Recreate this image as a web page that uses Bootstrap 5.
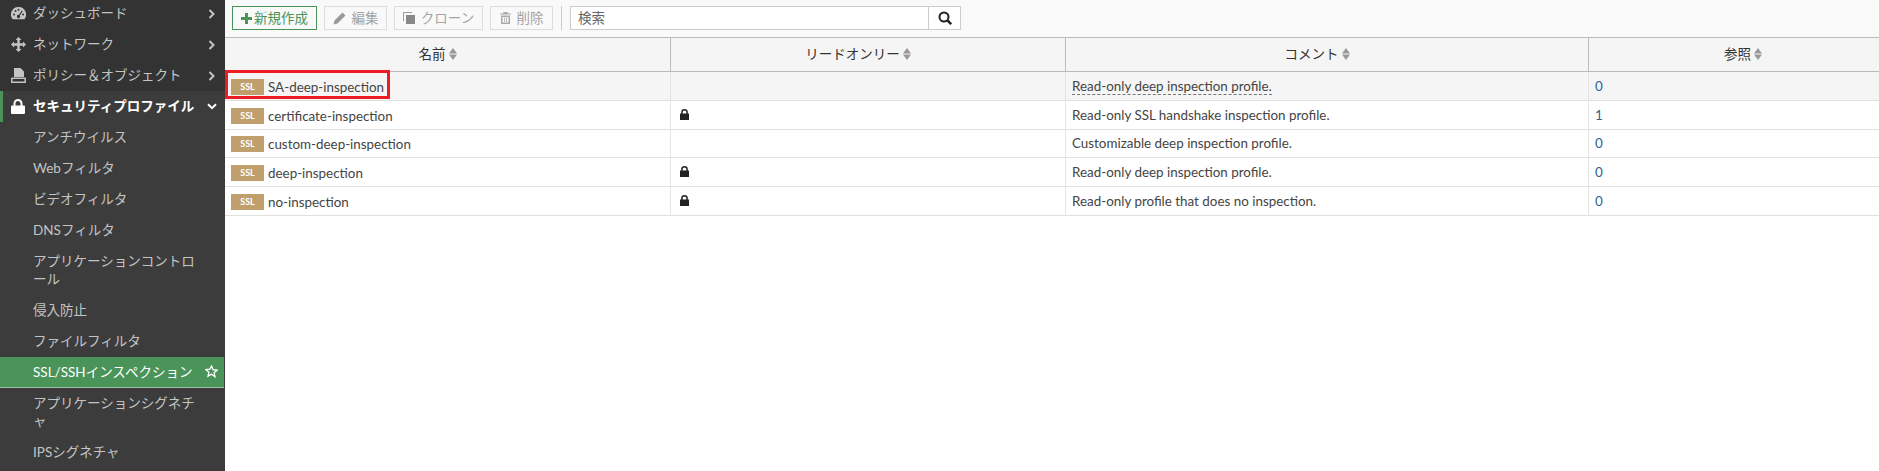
<!DOCTYPE html>
<html lang="ja">
<head>
<meta charset="utf-8">
<title>SSL/SSH</title>
<link rel="stylesheet" href="https://cdn.jsdelivr.net/npm/bootstrap@5.3.0/dist/css/bootstrap.min.css">
<style>
html,body{height:471px;overflow:hidden;}
body{font-family:Lato,"Noto Sans CJK JP",sans-serif;font-size:13.5px;color:#333;background:#fff;}
.shell{width:1879px;height:471px;position:relative;}
.sidenav{width:225px;flex:none;background:#3c3c3c;color:#c4c4c4;overflow:hidden;}
.topgroup{background:#333;margin-top:-2px;}
.navrow{height:31px;display:flex;align-items:center;padding-right:10px;}
.navrow .ico{width:33px;flex:none;display:flex;justify-content:center;padding-left:3px;}
.navrow .lbl{flex:1;}
.navrow.cur{background:#3c3c3c;color:#fff;font-weight:700;box-shadow:inset 3px 0 0 #4b9459;padding-right:8px;}
.sub{padding:6px 8px 7px 33px;line-height:18px;}
.sub.on{background:#4b9459;color:#fff;display:flex;justify-content:space-between;align-items:center;height:31px;border-bottom:1px solid #9dbfa3;padding-right:6px;margin-right:1px;}
.mainpane{flex:1;min-width:0;overflow:hidden;}
.tools{height:38px;background:#f9f9f9;border-bottom:1px solid #bbb;gap:7px;padding:6px 0 0 7px;}
.tbtn{height:24px;border:1px solid #ddd;border-radius:0;padding:0;font-size:13.5px;line-height:20px;color:#a4a4a4;background:transparent;display:flex;align-items:center;justify-content:center;gap:6px;}
.tbtn.addnew{border-color:#4b9459;color:#4b9459;gap:2px;width:85px;}
.wide63{width:63px;}
.wide89{width:89px;}
.tsep{width:1px;height:24px;background:#ccc;margin:0 1px;}
.findbox{width:391px;height:24px;border:1px solid #ccc;background:#fff;}
.findbox input{flex:1;border:0;outline:0;padding:0 7px;font:13.5px Lato,"Noto Sans CJK JP",sans-serif;color:#555;min-width:0;background:transparent;}
.findbox input::placeholder{color:#666;opacity:1;}
.findbtn{width:32px;border-left:1px solid #ccc;display:flex;align-items:center;justify-content:center;}
.gridtbl{width:1692px;table-layout:fixed;border-collapse:separate;border-spacing:0;margin:0;}
.colname{width:446px;}
.colro{width:395px;}
.colcmt{width:523px;}
.colref{width:328px;}
.gridtbl th{height:34px;background:#f5f5f5;font-weight:400;text-align:center;color:#333;border-right:1px solid #bbb;border-bottom:1px solid #bbb;padding:0 20px 0 0;vertical-align:middle;}
.gridtbl td{height:28.8px;padding:0 6px;border-right:1px solid #e4e4e4;border-bottom:1px solid #e0e0e0;vertical-align:middle;color:#444;background:#fff;font-size:13.4px;}
.gridtbl tr.sel td{background:#f5f5f5;}
.gridtbl th:last-child,.gridtbl td:last-child{border-right:0;}
.gridtbl td.namecell{padding:0 0 0 6px;}
.gridtbl td.refnum{color:#2a6496;}
.sorter{display:inline-block;vertical-align:-1px;margin-left:3px;}
.lockmark{display:block;margin:0 0 1px 3px;}
.tagwrap{display:inline-flex;align-items:center;gap:4px;}
.ssltag{display:inline-block;width:33px;height:16px;background:#bf9f6c;color:#fff;font-size:9px;font-weight:700;line-height:16px;text-align:center;}
.redmark{position:absolute;left:225px;top:70px;width:165px;height:29px;border:3px solid #ed1c24;pointer-events:none;}
.dash{border-bottom:1px dashed #777;}
</style>
</head>
<body>
<div class="shell d-flex">
<nav class="sidenav">
<div class="topgroup">
<div class="navrow"><span class="ico"><svg width="15" height="13" viewBox="0 0 15 13"><path fill="#c4c4c4" d="M7.5 0A7.5 7.5 0 0 0 1.6 12.2h11.800A7.500 7.500 0 0 0 7.500 0z"/><g fill="#333"><circle cx="3" cy="7.500" r="1"/><circle cx="4.500" cy="4" r="1"/><circle cx="7.500" cy="2.800" r="1"/><circle cx="12" cy="7.500" r="1"/><path d="M10.800 3.500l.9.5-2.900 4.500a1.600 1.600 0 1 1-1-.6z"/></g></svg></span><span class="lbl">ダッシュボード</span><svg width="7" height="10" viewBox="0 0 7 10"><path d="M1.500 1l4 4-4 4" fill="none" stroke="#c4c4c4" stroke-width="2"/></svg></div>
<div class="navrow"><span class="ico"><svg width="15" height="15" viewBox="0 0 15 15"><path fill="#c4c4c4" d="M7.500 0l3 3H8.700v3.300H12V4.500l3 3-3 3V8.700H8.700V12h1.800l-3 3-3-3h1.800V8.700H3v1.800l-3-3 3-3v1.800h3.300V3H4.500z"/></svg></span><span class="lbl">ネットワーク</span><svg width="7" height="10" viewBox="0 0 7 10"><path d="M1.500 1l4 4-4 4" fill="none" stroke="#c4c4c4" stroke-width="2"/></svg></div>
<div class="navrow"><span class="ico"><svg width="15" height="15" viewBox="0 0 15 15"><path fill="#c4c4c4" d="M3 0h6.500L13 3.500V9H3z"/><path fill="none" stroke="#c4c4c4" stroke-width="1.500" d="M.8 10v4.200h13.400V10"/><path fill="#c4c4c4" d="M.5 9.500h14V11H.5z"/></svg></span><span class="lbl">ポリシー＆オブジェクト</span><svg width="7" height="10" viewBox="0 0 7 10"><path d="M1.500 1l4 4-4 4" fill="none" stroke="#c4c4c4" stroke-width="2"/></svg></div>
</div>
<div class="navrow cur"><span class="ico"><svg width="14" height="15" viewBox="0 0 14 15"><path fill="#fff" d="M1 6.500h1.500V4.500a4.500 4.500 0 0 1 9 0v2H13a1 1 0 0 1 1 1V14a1 1 0 0 1-1 1H1a1 1 0 0 1-1-1V7.500a1 1 0 0 1 1-1zm3.500 0h5V4.500a2.500 2.500 0 0 0-5 0z"/></svg></span><span class="lbl">セキュリティプロファイル</span><svg width="10" height="7" viewBox="0 0 10 7"><path d="M1 1.200l4 4 4-4" fill="none" stroke="#fff" stroke-width="2"/></svg></div>
<div class="sub">アンチウイルス</div>
<div class="sub">Webフィルタ</div>
<div class="sub">ビデオフィルタ</div>
<div class="sub">DNSフィルタ</div>
<div class="sub">アプリケーションコントロ<br>ール</div>
<div class="sub">侵入防止</div>
<div class="sub">ファイルフィルタ</div>
<div class="sub on"><span>SSL/SSHインスペクション</span><svg width="13" height="13" viewBox="0 0 24 24"><path fill="none" stroke="#fff" stroke-width="2.400" d="M12 2l3 6.800 7.300.7-5.500 4.900 1.600 7.200L12 17l-6.400 3.600 1.600-7.200L1.700 8.500 9 7.800z"/></svg></div>
<div class="sub">アプリケーションシグネチ<br>ャ</div>
<div class="sub">IPSシグネチャ</div>
</nav>
<main class="mainpane">
<div class="tools d-flex align-items-start">
<button type="button" class="tbtn addnew"><svg width="11" height="11" viewBox="0 0 11 11"><path fill="#4b9459" d="M4 0h3v4h4v3H7v4H4V7H0V4h4z"/></svg>新規作成</button>
<button type="button" class="tbtn wide63"><svg width="13" height="13" viewBox="0 0 13 13"><path fill="#999" d="M9.500.5l3 3L4.500 11.500.5 12.500l1-4z"/></svg>編集</button>
<button type="button" class="tbtn wide89"><svg width="12" height="12" viewBox="0 0 12 12"><path fill="#888" d="M3 3h9v9H3z"/><path fill="none" stroke="#999" d="M.5 9V.5H9"/></svg>クローン</button>
<button type="button" class="tbtn wide63"><svg width="11" height="12" viewBox="0 0 11 12"><path fill="#aaa" d="M3.500 0h4l.5 1.500h3v1H0v-1h3zM1 3.500h9V12H1zm1.500 1.500v5.500h6V5z"/><path fill="#aaa" d="M4 5.500h.8v4.500H4zM6.200 5.500H7v4.500h-.8z"/></svg>削除</button>
<span class="tsep"></span>
<div class="findbox d-flex"><input type="text" placeholder="検索" aria-label="検索"><span class="findbtn"><svg width="14" height="14" viewBox="0 0 14 14"><circle cx="6" cy="6" r="4.500" fill="none" stroke="#222" stroke-width="2"/><path d="M9.200 9.200l4 4" stroke="#222" stroke-width="2.500"/></svg></span></div>
</div>
<table class="gridtbl">
<colgroup><col class="colname"><col class="colro"><col class="colcmt"><col class="colref"></colgroup>
<thead><tr>
<th>名前<svg class="sorter" width="8" height="12" viewBox="0 0 8 12"><path fill="#999" d="M4 0l4 5.500H0zM4 12L0 6.500h8z"/></svg></th>
<th>リードオンリー<svg class="sorter" width="8" height="12" viewBox="0 0 8 12"><path fill="#999" d="M4 0l4 5.500H0zM4 12L0 6.500h8z"/></svg></th>
<th>コメント<svg class="sorter" width="8" height="12" viewBox="0 0 8 12"><path fill="#999" d="M4 0l4 5.500H0zM4 12L0 6.500h8z"/></svg></th>
<th>参照<svg class="sorter" width="8" height="12" viewBox="0 0 8 12"><path fill="#999" d="M4 0l4 5.500H0zM4 12L0 6.500h8z"/></svg></th>
</tr></thead>
<tbody>
<tr class="sel"><td class="namecell"><span class="tagwrap"><span class="ssltag">SSL</span>SA-deep-inspection</span></td><td></td><td><span class="dash">Read-only deep inspection profile.</span></td><td class="refnum">0</td></tr>
<tr><td class="namecell"><span class="tagwrap"><span class="ssltag">SSL</span>certificate-inspection</span></td><td><svg class="lockmark" width="9" height="11" viewBox="0 0 9 11"><path fill="#222" d="M1.200 4.500V3a3.300 3 0 0 1 6.600 0v1.500H9V11H0V4.500zm1.500 0h3.600V3a1.800 1.600 0 0 0-3.600 0z"/></svg></td><td>Read-only SSL handshake inspection profile.</td><td class="refnum">1</td></tr>
<tr><td class="namecell"><span class="tagwrap"><span class="ssltag">SSL</span>custom-deep-inspection</span></td><td></td><td>Customizable deep inspection profile.</td><td class="refnum">0</td></tr>
<tr><td class="namecell"><span class="tagwrap"><span class="ssltag">SSL</span>deep-inspection</span></td><td><svg class="lockmark" width="9" height="11" viewBox="0 0 9 11"><path fill="#222" d="M1.200 4.500V3a3.300 3 0 0 1 6.600 0v1.500H9V11H0V4.500zm1.500 0h3.600V3a1.800 1.600 0 0 0-3.600 0z"/></svg></td><td>Read-only deep inspection profile.</td><td class="refnum">0</td></tr>
<tr><td class="namecell"><span class="tagwrap"><span class="ssltag">SSL</span>no-inspection</span></td><td><svg class="lockmark" width="9" height="11" viewBox="0 0 9 11"><path fill="#222" d="M1.200 4.500V3a3.300 3 0 0 1 6.600 0v1.500H9V11H0V4.500zm1.500 0h3.600V3a1.800 1.600 0 0 0-3.600 0z"/></svg></td><td>Read-only profile that does no inspection.</td><td class="refnum">0</td></tr>
</tbody>
</table>
</main>
<div class="redmark"></div>
</div>
</body>
</html>
